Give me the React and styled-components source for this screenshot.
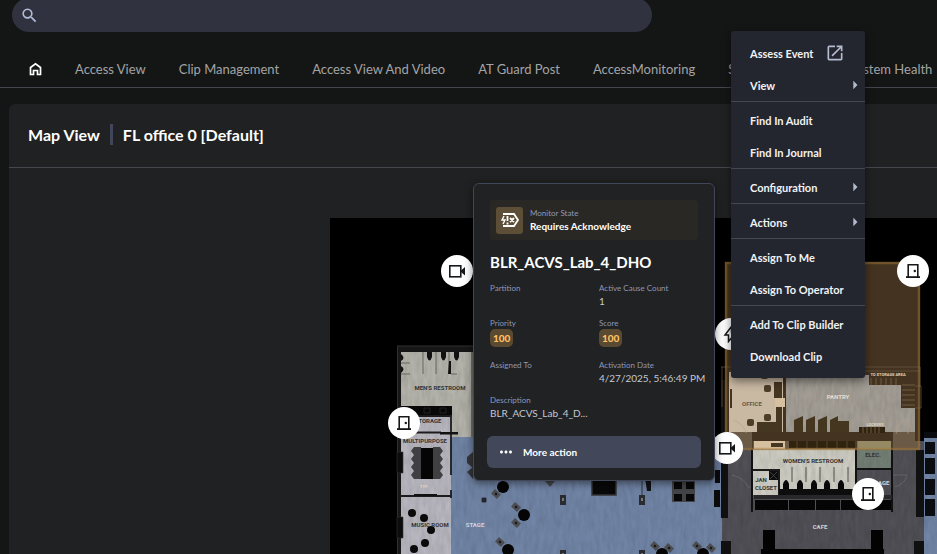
import React, { useState } from 'react';
import styled, { createGlobalStyle } from 'styled-components';
import { MdSearch, MdOpenInNew, MdArrowRight, MdMoreHoriz } from 'react-icons/md';

const GlobalStyle = createGlobalStyle`
	* {
		box-sizing: border-box;
	}
	body {
		margin: 0;
		background: #141615;
		color: #fff;
		font-family: Lato, 'Liberation Sans', sans-serif;
	}
	button, input {
		font-family: inherit;
	}
`;

const Page = styled.div`
	position: relative;
	display: flex;
	flex-direction: column;
	height: 100vh;
	overflow: hidden;
`;

const SearchBar = styled.label`
	display: flex;
	align-items: center;
	flex: none;
	gap: 8px;
	width: calc(70% - 16px);
	height: 34px;
	margin: -2px 0 0 12px;
	padding: 0 8px;
	border-radius: 17px;
	background: #30333f;
	color: #b4bbd8;
`;

const SearchInput = styled.input`
	flex: 1;
	border: 0;
	outline: 0;
	background: transparent;
	color: #fff;
	font-size: 14px;
`;

const TabBar = styled.nav`
	display: flex;
	align-items: center;
	flex: none;
	gap: 33px;
	height: 56px;
	padding: 18px 0 0 29px;
	border-bottom: 1px solid #45474f;
`;

const Tab = styled.a`
	display: flex;
	flex: none;
	color: ${({ $active }) => ($active ? '#fff' : '#a3a4a5')};
	font-size: 13px;
	line-height: 16px;
	text-decoration: none;
	white-space: nowrap;
`;

const Panel = styled.main`
	display: flex;
	flex-direction: column;
	flex: 1;
	margin: 16px 0 0 9px;
	border-radius: 6px 0 0 0;
	background: #202122;
`;

const PanelHeader = styled.header`
	display: flex;
	align-items: center;
	height: 64px;
	padding: 0 19px 2px;
	border-bottom: 1px solid #45474f;
`;

const PanelTitle = styled.h1`
	margin: 0;
	font-size: 16px;
	line-height: 20px;
	font-weight: 700;
`;

const TitleDivider = styled.span`
	width: 3px;
	height: 21px;
	margin: 0 10px;
	background: #41465a;
`;

const MapArea = styled.section`
	display: flex;
	flex: 1;
	padding: 50px 0 0 321px;
`;

const MapCanvas = styled.div`
	position: relative;
	flex: 1;
	overflow: hidden;
	background: #000;
`;

const Plan = styled.svg`
	display: block;
	width: 100%;
	height: 100%;
	font-family: Roboto, sans-serif;
	font-weight: 700;
`;

const Marker = styled.button`
	position: absolute;
	left: ${({ $x }) => $x}px;
	top: ${({ $y }) => $y}px;
	display: flex;
	align-items: center;
	justify-content: center;
	width: 32px;
	height: 32px;
	padding: 0;
	border: 0;
	border-radius: 50%;
	background: #fff;
	color: #17181a;
`;

const Popup = styled.article`
	position: absolute;
	left: 473px;
	top: 183px;
	width: 242px;
	padding: 16px 13px 12px;
	border: 1px solid #414659;
	border-radius: 6px;
	background: #202223;
	box-shadow: 0 2px 8px rgba(0, 0, 0, 0.5);
`;

const PopupBody = styled.div`
	padding: 0 3px;
`;

const StateBanner = styled.div`
	display: flex;
	align-items: center;
	gap: 7px;
	height: 40px;
	padding: 0 6px;
	border-radius: 3px;
	background: #2a2824;
`;

const StateIcon = styled.span`
	display: flex;
	align-items: center;
	justify-content: center;
	width: 27px;
	height: 27px;
	border-radius: 3px;
	background: #5d4f37;
`;

const Label = styled.dt`
	color: #8f97b9;
	font-size: 8px;
	line-height: 12px;
`;

const Value = styled.dd`
	margin: 0;
	color: ${({ $strong }) => ($strong ? '#fff' : '#c5c8d3')};
	font-size: 10px;
	line-height: 14px;
	font-weight: ${({ $strong }) => ($strong ? 700 : 400)};
	white-space: nowrap;
`;

const StateText = styled.dl`
	margin: 0;
`;

const PopupTitle = styled.h2`
	margin: 12px 0 10px;
	font-size: 15px;
	line-height: 20px;
	font-weight: 700;
`;

const Details = styled.dl`
	display: grid;
	grid-template-columns: 109px 1fr;
	grid-template-rows: 35px 42px 35px 35px;
	margin: 0;
`;

const Badge = styled.span`
	display: inline-block;
	padding: 0 3px;
	border-radius: 5px;
	background: #5a4a31;
	color: #ffc062;
	font-size: 10px;
	line-height: 18px;
	font-weight: 900;
`;

const MoreButton = styled.button`
	display: flex;
	align-items: center;
	gap: 8px;
	width: 100%;
	height: 32px;
	margin-top: 7px;
	padding: 0 10px;
	border: 0;
	border-radius: 6px;
	background: #424759;
	color: #fff;
	font-size: 10px;
	font-weight: 700;
`;

const Menu = styled.div`
	position: absolute;
	left: 731px;
	top: 31px;
	width: 134px;
	padding: 6px 0;
	border-radius: 3px;
	background: #23262e;
	box-shadow: 0 3px 10px rgba(0, 0, 0, 0.5);
`;

const MenuGroup = styled.div`
	& + & {
		padding-top: 2px;
		border-top: 1px solid #44474f;
	}
`;

const MenuItem = styled.button`
	display: flex;
	align-items: center;
	gap: 12px;
	width: 100%;
	height: 32px;
	padding: 0 0 0 19px;
	border: 0;
	background: transparent;
	color: #f1f2f4;
	font-size: 11px;
	font-weight: 700;
	text-align: left;
	white-space: nowrap;

	svg {
		flex: none;
		color: #b4bbd0;
	}
`;

const SubmenuArrow = styled(MdArrowRight)`
	margin-left: auto;
`;

const tabs = [
	'Access View',
	'Clip Management',
	'Access View And Video',
	'AT Guard Post',
	'AccessMonitoring',
	'System Reports',
	'System Health',
];

const menuGroups = [
	[{ name: 'Assess Event', external: true }, { name: 'View', sub: true }],
	[{ name: 'Find In Audit' }, { name: 'Find In Journal' }],
	[{ name: 'Configuration', sub: true }],
	[{ name: 'Actions', sub: true }],
	[{ name: 'Assign To Me' }, { name: 'Assign To Operator' }],
	[{ name: 'Add To Clip Builder' }, { name: 'Download Clip' }],
];

const markers = [
	{ type: 'camera', x: 111, y: 37 },
	{ type: 'door', x: 58, y: 189 },
	{ type: 'camera', x: 381, y: 214 },
	{ type: 'door', x: 567, y: 37 },
	{ type: 'door', x: 522, y: 260 },
	{ type: 'bolt', x: 385, y: 100 },
];

const details = [
	{ label: 'Partition' },
	{ label: 'Active Cause Count', value: '1' },
	{ label: 'Priority', badge: '100' },
	{ label: 'Score', badge: '100' },
	{ label: 'Assigned To' },
	{ label: 'Activation Date', value: '4/27/2025, 5:46:49 PM' },
	{ label: 'Description', value: 'BLR_ACVS_Lab_4_D...' },
];

function MarkerIcon({ type }) {
	if (type === 'camera') {
		return (
			<svg width="18" height="16" viewBox="0 0 18 16">
				<rect x="1.8" y="2.8" width="11" height="11" fill="none" stroke="currentColor" strokeWidth="1.6" />
				<path d="M13 7.5 L17 4 V12.5 L13 9Z" fill="currentColor" />
			</svg>
		);
	}
	if (type === 'door') {
		return (
			<svg width="16" height="16" viewBox="0 0 16 16">
				<path d="M3.2 14 V1.8 H12.8 V14" fill="none" stroke="currentColor" strokeWidth="1.6" />
				<path d="M1 13.2h14v1.8H1z" fill="currentColor" />
				<circle cx="9.8" cy="8" r="1.2" fill="currentColor" />
			</svg>
		);
	}
	return (
		<svg width="18" height="18" viewBox="0 0 18 18">
			<path d="M9.5 1.5 L3 10 H6.5 V16.5 L14 7.5 H9.5Z" fill="none" stroke="currentColor" strokeWidth="1.5" />
		</svg>
	);
}

// table with two chairs turned towards it
function RoundTable({ x, y, chairs }) {
	return (
		<g>
			{chairs.map(([cx, cy], key) => (
				<g key={key} transform={`translate(${cx} ${cy}) rotate(42)`}>
					<rect x="-4" y="-3" width="8" height="6" fill="#4b4d50" />
					<rect x="-1" y="-1" width="2" height="2" fill="#111" />
				</g>
			))}
			<circle cx={x} cy={y} r="6" fill="#050505" />
		</g>
	);
}

function FloorPlan() {
	return (
		<Plan viewBox="330 218 607 336" preserveAspectRatio="xMinYMin slice" aria-label="Floor plan">
			<defs>
				<filter id="grain" x="0" y="0" width="100%" height="100%">
					<feTurbulence type="fractalNoise" baseFrequency="0.25 0.07" numOctaves="3" seed="4" />
					<feColorMatrix type="saturate" values="0" />
					<feComponentTransfer result="noise">
						<feFuncR type="linear" slope="0.35" intercept="0.6" />
						<feFuncG type="linear" slope="0.35" intercept="0.6" />
						<feFuncB type="linear" slope="0.35" intercept="0.6" />
						<feFuncA type="linear" slope="0" intercept="1" />
					</feComponentTransfer>
					<feBlend in="SourceGraphic" in2="noise" mode="multiply" />
					<feComposite in2="SourceGraphic" operator="in" />
				</filter>
			</defs>

			{/* floors */}
			<g filter="url(#grain)">
				<path d="M451 437H722V554H451Z M924 437H937V554H924Z" fill="#7a8fb3" />
				<path d="M401 350H476V437H401Z" fill="#c2c1b8" />
				<path d="M400 417H451V554H400Z" fill="#c6c5ce" />
				<path d="M722 441H924V554H722Z" fill="#57575d" />
				<path d="M752 449H856V495H752Z" fill="#dddcd2" />
				<path d="M857 441H892V469H857Z" fill="#7c897e" />
			</g>

			{/* west wing walls */}
			<path d="M397 346H476V352H401V554H397Z" fill="#161616" />
			<path d="M397 346H476M397.500 346V554" stroke="#303030" fill="none" />
			<path d="M401 406H452V415H401Z" fill="#080808" />
			<path d="M424 408h6v5h-6z M440 408h6v5h-6z" fill="none" stroke="#333" strokeWidth="0.6" />
			<path d="M400 416H451V475M400 432.500H441M400 496H451M451 490V498" fill="none" stroke="#1c1c1f" strokeWidth="1.800" />
			<path d="M440 432h18v2.500h-18z M414 494h23v2h-23z" fill="#111" />
			<path d="M397 452h6v21h-6z M397 517h6v21h-6z" fill="#0c0c0c" stroke="#333" strokeWidth="0.6" />
			<path d="M423 352V374M436 352V374M449 352V374M401 363H410M401 374H410M451 374H457" stroke="#55554f" strokeWidth="0.8" />
			<path d="M427 352h5v5q-2.500 7 -5 0z M441 352h5v5q-2.500 7 -5 0z M454 352h5v5q-2.500 7 -5 0z M401 354q5 4 0 7z M401 366q5 3 0 7z M449 361h2v13h-3z" fill="#111" />
			<path d="M472 352V437" stroke="#333" />
			<path d="M421 448h12v31h-12z" fill="#050505" />
			{[451, 459, 467, 475].map(y => (
				<path
					key={y}
					d={`M414 ${y - 4}H421V${y + 4}H414L411 ${y}Z M433 ${y - 4}H440L443 ${y}L440 ${y + 4}H433Z`}
					fill="#404043"
				/>
			))}
			{[[412, 513], [424, 518], [431, 530], [425, 543], [414, 549]].map(([x, y]) => (
				<circle key={x} cx={x} cy={y} r="4" fill="#0a0a0a" />
			))}

			{/* stage furniture */}
			<RoundTable x={503} y={487} chairs={[[496, 494]]} />
			<RoundTable x={524} y={515} chairs={[[516, 507], [516, 523]]} />
			<RoundTable x={508} y={550} chairs={[[500, 542]]} />
			<RoundTable x={662} y={554} chairs={[[655, 546], [669, 548]]} />
			<RoundTable x={703} y={554} chairs={[[697, 546], [711, 548]]} />
			<path d="M467 457l6-5v16l-6-5z M467 472l6-5v12z" fill="#34363a" />
			<path d="M545 481l6-4 4 4-5 6z" fill="#44464a" />
			<path d="M592 478h24v17h-24z" fill="#080808" stroke="#333" strokeWidth="1.500" />
			<path d="M645 478h6v13h-4z" fill="#101113" />
			<path d="M482 498h4v4h-4z M642 480V495" fill="#22252b" stroke="#22252b" strokeWidth="0.800" />
			{[[560, 495], [639, 495], [560, 550], [639, 550]].map(([x, y]) => (
				<g key={`${x}-${y}`}>
					<rect x={x} y={y} width="6" height="10" fill="#292b2f" />
					<rect x={x + 2} y={y + 3} width="2" height="3" fill="#707780" />
				</g>
			))}
			<path d="M672 480h23v22h-23z" fill="#434448" />
			<path d="M674 482h8v7h-8z M686 482h8v7h-8z M674 494h8v7h-8z M686 494h8v7h-8z" fill="#080808" />
			<path d="M715 470h5v13h-5z M714 490h6v17h-6z" fill="#0b0b0c" />

			{/* east wing */}
			<path d="M721 380H728V518H721Z M721 541H731V554H721Z M916 450H924V517H916Z M914 541H924V554H914Z" fill="#101011" />
			<path d="M924 432H937V438H924Z M925 442H935V454H925Z M925 458H935V474H925Z M925 479H935V495H925Z M925 499H935V516H925Z" fill="#0b0c0f" />
			<path d="M732 475q12 3 16 12H752 M892 475H907q-2 9-12 12" fill="none" stroke="#6b6b70" strokeWidth="0.7" />
			<path d="M753 470H779V495" fill="none" stroke="#1b1b1b" strokeWidth="2" />
			<path d="M769 471h9v9h-9z M779 489H856V496H779Z" fill="#0d0d0d" />
			<path d="M770 472l7 7m0-7l-7 7" stroke="#555" strokeWidth="0.700" />
			<path d="M792 467V482M806 467V482M820 467V482M834 467V482M848 467V482" stroke="#34342f" strokeWidth="0.800" />
			{[786, 800, 814, 827, 841].map(x => (
				<path key={x} d={`M${x - 3} 489V484q3-8 6 0V489Z`} fill="#080808" />
			))}
			<path d="M752 440V512M856 449V495M857 469H892M892 436V512M856 449V441" stroke="#111" strokeWidth="2" />
			<path d="M754 495H892V499H754Z" fill="#28282a" />
			<path d="M755 500h33v10h-33z M789 500h26v10h-26z M816 500h24v10h-24z M841 500h50v10h-50z" fill="#050505" />
			<path d="M763 530h12v20h-12z M871 530h12v20h-12z M761 549h123v5h-123z" fill="#030303" />

			{/* alarm zone */}
			<path d="M725 262H920V441H725Z" fill="#443320" />
			<path d="M725 441H920V450H725Z" fill="#8a6a3c" fillOpacity="0.5" />
			<path d="M729 372H783V432H729Z" fill="#c9b8a2" />
			<path d="M893 432H915V449H893Z M729 432H752V449H729Z" fill="#6b5a45" />
			<g filter="url(#grain)">
				<path d="M786 375H869V385H901V408H915V432H786Z" fill="#b0aaa1" />
			</g>
			<path d="M754 441H785V449H754Z M785 398h-10v9h10z" fill="#d6c0a0" />
			<path d="M858 441H891V449H858Z" fill="#958a64" />
			<path d="M774 382h8v16h-8z M776 407h6v25h-6z M757 422h20v10h-20z M730 389h2v19h-2z M771 443h12v4h-12z" fill="#453622" />
			{[[767, 388], [767, 417], [750, 422], [764, 375]].map(([x, y]) => (
				<rect key={`${x}-${y}`} x={x - 3} y={y - 3} width="7" height="7" rx="2" fill="#4c3d29" />
			))}
			<path d="M794 432V420l9-4V432ZM806 432V420l9-4V432ZM818 432V420l9-4V432ZM830 432V420l8-4V432ZM838 421h11v11h-11z" fill="#453620" />
			<path d="M789 441h66v7h-66z M859 427h26v6h-26z" fill="#30230f" />
			<path d="M797 441v7m10-7v7m10-7v7m10-7v7m10-7v7m10-7v7" stroke="#604b2b" strokeWidth="0.800" />
			<path d="M902 385h13m-13 5h13m-13 5h13m-13 5h13m-13 5h13M871 378v7m5-7v7m5-7v7m5-7v7m5-7v7m5-7v7M863 427v6m4-6v6m4-6v6m4-6v6m4-6v6" stroke="#7b6747" strokeWidth="0.800" />
			<path d="M721 367H920V387M729 371H920M722 367V407M915 386h6v22h-6" fill="none" stroke="#6a5a42" strokeWidth="0.700" />
			<path d="M733 420q11 4 13 13M896 434q2-14 12-14v14" fill="none" stroke="#b7a184" strokeWidth="0.600" />
			<path d="M726 263H919V449H726Z" fill="none" stroke="#a67a3a" strokeOpacity="0.450" strokeWidth="2.500" />

			<g fill="#343434" fontSize="6" textAnchor="middle">
				<text x="440" y="390">MEN'S RESTROOM</text>
				<text x="428" y="423">STORAGE</text>
				<text x="425" y="443">MULTIPURPOSE</text>
				<text x="430" y="527">MUSIC ROOM</text>
				<text x="752" y="406" fill="#685b49">OFFICE</text>
				<text x="813" y="463">WOMEN'S RESTROOM</text>
				<text x="873" y="457">ELEC.</text>
				<text x="761" y="482">JAN</text>
				<text x="766" y="490">CLOSET</text>
			</g>
			<g fill="#d1d4da" fontSize="6" textAnchor="middle">
				<text x="475" y="527">STAGE</text>
				<text x="838" y="399" fill="#e6ded2">PANTRY</text>
				<text x="820" y="529">CAFE</text>
				<text x="876" y="485">STORAGE</text>
			</g>
			<g fill="#e2d3ba" fontSize="4" textAnchor="middle">
				<text x="888" y="376">TO STORAGE AREA</text>
				<text x="875" y="426">LOCKERS</text>
				<text x="424" y="488">TYP.</text>
			</g>
		</Plan>
	);
}

function EventPopup() {
	return (
		<Popup>
			<PopupBody>
				<StateBanner>
					<StateIcon>
						<svg width="20" height="18" viewBox="0 0 20 18" fill="none" stroke="#fff" strokeWidth="1.800">
							<path d="M3 3H14L18 9L14 15H3" />
							<path d="M4 5L2 9H5L3 13" strokeWidth="1.400" />
							<path d="M7.500 5V10M7.500 11.500V13.500M10 7L14 11M14 7L10 11" />
						</svg>
					</StateIcon>
					<StateText>
						<Label>Monitor State</Label>
						<Value $strong>Requires Acknowledge</Value>
					</StateText>
				</StateBanner>
				<PopupTitle>BLR_ACVS_Lab_4_DHO</PopupTitle>
				<Details>
					{details.map((item, key) => (
						<div key={key}>
							<Label>{item.label}</Label>
							<Value>{item.badge ? <Badge>{item.badge}</Badge> : item.value}</Value>
						</div>
					))}
				</Details>
			</PopupBody>
			<MoreButton type="button">
				<MdMoreHoriz size={18} />
				More action
			</MoreButton>
		</Popup>
	);
}

function App() {
	const [search, setSearch] = useState('');

	return (
		<>
			<GlobalStyle />
			<Page>
				<SearchBar>
					<MdSearch size={19} />
					<SearchInput
						aria-label="Search"
						value={search}
						onChange={e => setSearch(e.target.value)}
					/>
				</SearchBar>
				<TabBar>
					<Tab href="#home" aria-label="Home" $active>
						<svg width="13" height="14" viewBox="0 0 13 14" fill="none" stroke="currentColor" strokeWidth="1.700">
							<path d="M1.500 12.500V5.500L6.500 1.800L11.500 5.500V12.500H8.500V8.500H4.500V12.500Z" />
						</svg>
					</Tab>
					{tabs.map(tab => (
						<Tab key={tab} href={`#${tab}`}>
							{tab}
						</Tab>
					))}
				</TabBar>
				<Panel>
					<PanelHeader>
						<PanelTitle>Map View</PanelTitle>
						<TitleDivider />
						<PanelTitle as="h2">FL office 0 [Default]</PanelTitle>
					</PanelHeader>
					<MapArea>
						<MapCanvas>
							<FloorPlan />
							{markers.map(({ type, x, y }, key) => (
								<Marker key={key} type="button" aria-label={type} $x={x} $y={y}>
									<MarkerIcon type={type} />
								</Marker>
							))}
						</MapCanvas>
					</MapArea>
				</Panel>
				<EventPopup />
				<Menu role="menu">
					{menuGroups.map((group, key) => (
						<MenuGroup key={key}>
							{group.map(item => (
								<MenuItem key={item.name} type="button" role="menuitem">
									{item.name}
									{item.external && <MdOpenInNew size={20} />}
									{item.sub && <SubmenuArrow size={20} />}
								</MenuItem>
							))}
						</MenuGroup>
					))}
				</Menu>
			</Page>
		</>
	);
}

export default App;
